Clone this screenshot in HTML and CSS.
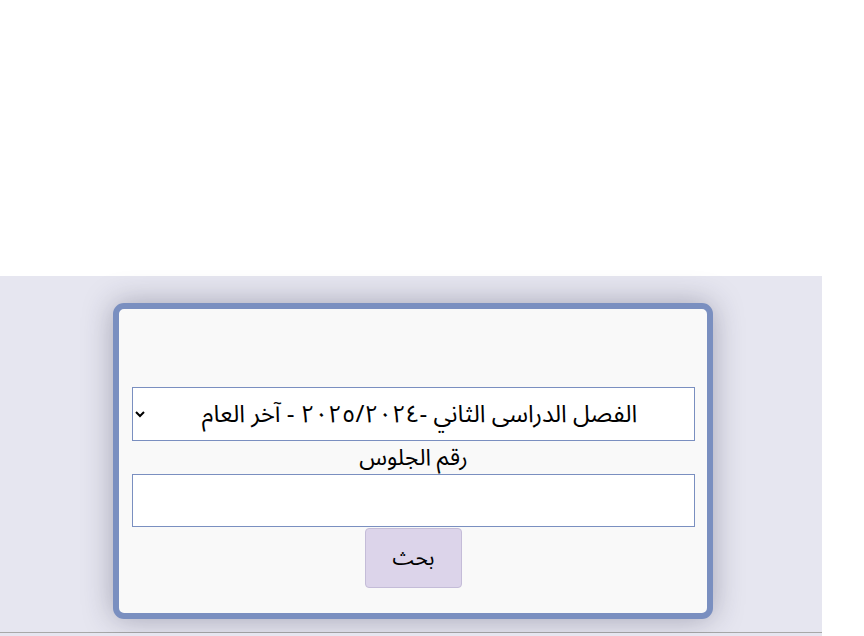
FILE: index.html
```html
<!DOCTYPE html>
<html lang="ar">
<head>
<meta charset="utf-8">
<link rel="stylesheet" href="styles.css">
</head>
<body>
<div class="top"></div>
<section class="band">
  <form class="card" dir="rtl">
    <div class="spacer"></div>
    <select class="term">
      <option>الفصل الدراسى الثاني -٢٠٢٥/٢٠٢٤ - آخر العام</option>
    </select>
    <label class="lbl" for="seat">رقم الجلوس</label>
    <input id="seat" class="field" type="text">
    <button class="btn" type="button">بحث</button>
  </form>
</section>
<div class="band rest"></div>
</body>
</html>
```
FILE: styles.css
```css
html, body {
  margin: 0;
  padding: 0;
  background: #ffffff;
  font-family: "Noto Sans Arabic", "DejaVu Sans", sans-serif;
  overflow: hidden;
}
.top {
  height: 276px;
}
.band {
  width: 822px;
  background: #e6e6f0;
  padding: 27px 0 13px 0;
  border-bottom: 1px solid #a8a8a8;
  box-sizing: border-box;
}
.rest {
  height: 20px;
  padding: 0;
  border: 0;
}
.card {
  margin-left: 113px;
  width: 600px;
  box-sizing: border-box;
  border: 6px solid #7a8fc0;
  border-radius: 11px;
  background: #f9f9f9;
  box-shadow: 0 0 30px rgba(40, 40, 70, 0.35);
  padding: 0 12px 25px 13px;
  display: flex;
  flex-direction: column;
  align-items: center;
}
.spacer {
  height: 78px;
}
.term {
  width: 100%;
  height: 54px;
  border: 1px solid #7a8fc0;
  border-radius: 0;
  background: #ffffff;
  font-family: inherit;
  font-size: 24px;
  color: #000;
  text-align: center;
  text-align-last: center;
  padding: 0 8px 4px 8px;
}
.lbl {
  font-size: 23px;
  line-height: 33px;
  height: 33px;
  color: #000;
}
.field {
  width: 100%;
  height: 53px;
  box-sizing: border-box;
  border: 1px solid #7a8fc0;
  border-radius: 0;
  background: #fff;
  font-size: 20px;
  margin: 0;
}
.btn {
  margin-top: 1px;
  width: 97px;
  height: 60px;
  background: #dcd4ea;
  border: 1px solid #c4bcd8;
  border-radius: 4px;
  font-family: inherit;
  font-size: 21px;
  line-height: 1;
  color: #000;
}
```
